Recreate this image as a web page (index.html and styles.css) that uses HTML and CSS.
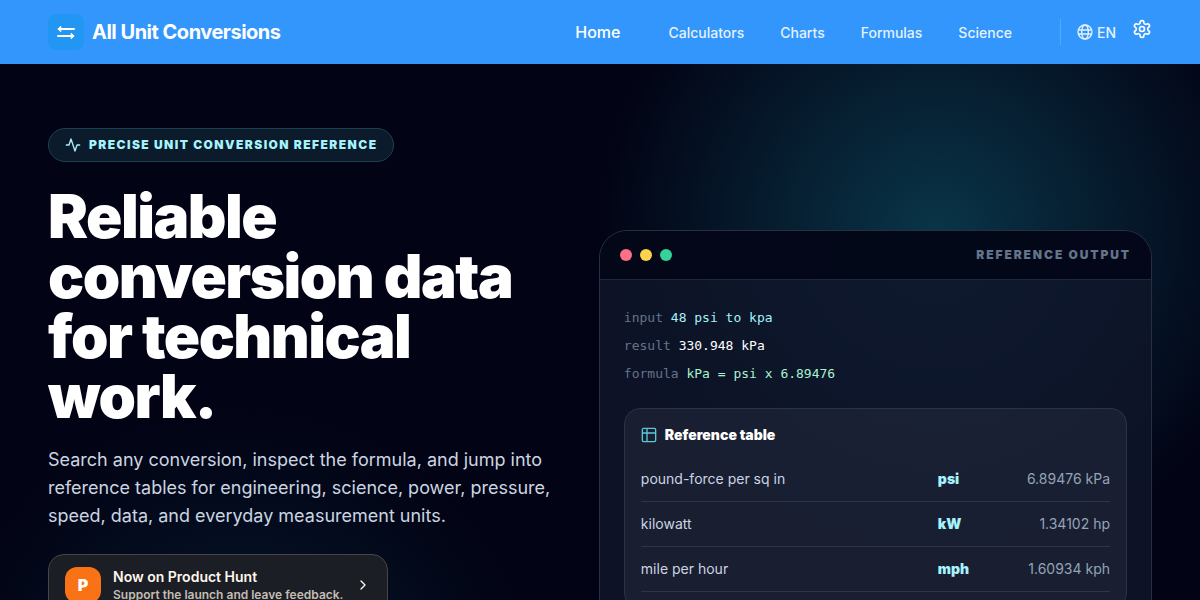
FILE: index.html
```html
<!DOCTYPE html>
<html lang="en">
    <head>
        <meta charset="utf-8">
        <meta name="viewport" content="width=device-width, initial-scale=1">
        <title>All Unit Conversions</title>
        <link rel="stylesheet" href="styles.css">
    </head>
    <body>
        <header class="topbar">
            <a class="brand" href="#">
                <span class="brand-icon">
                    <svg width="20" height="20" viewBox="0 0 20 20" fill="none" stroke="currentColor" stroke-width="2" stroke-linecap="round" stroke-linejoin="round"><path d="M18 7H3M17 14H2"/><path d="M4.500 4.500 1.800 7l2.700 2.500zM15.500 11.500l2.700 2.500-2.700 2.500z" fill="currentColor" stroke-width="1"/></svg>
                </span>
                All Unit Conversions
            </a>
            <nav class="nav">
                <a class="home" href="#">Home</a>
                <a href="#">Calculators</a>
                <a href="#">Charts</a>
                <a href="#">Formulas</a>
                <a href="#">Science</a>
            </nav>
            <div class="tools">
                <button class="lang" type="button">
                    <svg width="16" height="16" viewBox="0 0 24 24" fill="none" stroke="currentColor" stroke-width="2"><circle cx="12" cy="12" r="10.500"/><ellipse cx="12" cy="12" rx="5" ry="10.500"/><path d="M2 9h20M2 15h20"/></svg>
                    EN
                </button>
                <button class="settings" type="button" aria-label="Settings">
                    <svg width="20" height="20" viewBox="0 0 24 24" fill="none" stroke="currentColor" stroke-width="2" stroke-linecap="round" stroke-linejoin="round"><path d="M12.22 2h-.44a2 2 0 0 0-2 2v.18a2 2 0 0 1-1 1.73l-.43.25a2 2 0 0 1-2 0l-.15-.08a2 2 0 0 0-2.73.73l-.22.38a2 2 0 0 0 .73 2.73l.15.1a2 2 0 0 1 1 1.72v.51a2 2 0 0 1-1 1.74l-.15.09a2 2 0 0 0-.73 2.73l.22.38a2 2 0 0 0 2.73.73l.15-.08a2 2 0 0 1 2 0l.43.25a2 2 0 0 1 1 1.73V20a2 2 0 0 0 2 2h.44a2 2 0 0 0 2-2v-.18a2 2 0 0 1 1-1.73l.43-.25a2 2 0 0 1 2 0l.15.08a2 2 0 0 0 2.73-.73l.22-.39a2 2 0 0 0-.73-2.73l-.15-.08a2 2 0 0 1-1-1.74v-.5a2 2 0 0 1 1-1.74l.15-.09a2 2 0 0 0 .73-2.73l-.22-.38a2 2 0 0 0-2.73-.73l-.15.08a2 2 0 0 1-2 0l-.43-.25a2 2 0 0 1-1-1.73V4a2 2 0 0 0-2-2z"/><circle cx="12" cy="12" r="3"/></svg>
                </button>
            </div>
        </header>
        <main class="hero">
            <section class="intro">
                <p class="pill">
                    <svg width="16" height="16" viewBox="0 0 24 24" fill="none" stroke="currentColor" stroke-width="2" stroke-linecap="round" stroke-linejoin="round"><path d="M22 12h-4l-3 9L9 3l-3 9H2"/></svg>
                    Precise unit conversion reference
                </p>
                <h1>Reliable conversion data for technical work.</h1>
                <p class="lead">Search any conversion, inspect the formula, and jump into reference tables for engineering, science, power, pressure, speed, data, and everyday measurement units.</p>
                <a class="launch" href="#">
                    <span class="launch-logo">P</span>
                    <span class="launch-text"><strong>Now on Product Hunt</strong><small>Support the launch and leave feedback.</small></span>
                    <svg width="16" height="16" viewBox="0 0 24 24" fill="none" stroke="currentColor" stroke-width="2" stroke-linecap="round" stroke-linejoin="round"><path d="m9 18 6-6-6-6"/></svg>
                </a>
            </section>
            <section class="panel">
                <div class="panel-head">
                    <span class="dot red"></span>
                    <span class="dot yellow"></span>
                    <span class="dot green"></span>
                    <h2>Reference output</h2>
                </div>
                <div class="panel-body">
                    <div class="output">
                        <p>input <span class="in">48 psi to kpa</span></p>
                        <p>result <span class="res">330.948 kPa</span></p>
                        <p>formula <span class="eq">kPa = psi x 6.89476</span></p>
                    </div>
                    <div class="reference">
                        <h3>
                            <svg width="16" height="16" viewBox="0 0 24 24" fill="none" stroke="currentColor" stroke-width="2" stroke-linejoin="round"><rect x="2" y="2" width="20" height="20" rx="2"/><path d="M2 9h20M9 2v20"/></svg>
                            Reference table
                        </h3>
                        <table>
                            <tr><td>pound-force per sq in</td><td class="unit">psi</td><td class="value">6.89476 kPa</td></tr>
                            <tr><td>kilowatt</td><td class="unit">kW</td><td class="value">1.34102 hp</td></tr>
                            <tr><td>mile per hour</td><td class="unit">mph</td><td class="value">1.60934 kph</td></tr>
                        </table>
                    </div>
                </div>
            </section>
        </main>
    </body>
</html>
```
FILE: styles.css
```css
* {box-sizing:border-box;}
body {margin:0;background:#020314;color:#fff;font-family:Inter, "Liberation Sans", sans-serif;}
h1, h2, h3, p {margin:0;}
a {color:inherit;text-decoration:none;}
button {background:none;border:0;padding:0;color:inherit;font:inherit;cursor:pointer;}
svg {display:block;flex:none;}

.topbar {display:flex;align-items:center;height:64px;padding:0 48px;background:#3296fc;}
.brand {display:flex;align-items:center;gap:8px;font-size:20px;font-weight:700;letter-spacing:-0.025em;}
.brand-icon {display:grid;place-items:center;width:36px;height:36px;border-radius:8px;background:#2196f3;}
.nav {display:flex;align-items:center;gap:36px;margin-left:auto;font-size:14px;font-weight:500;color:#e3f2fd;}
.nav .home {margin-right:12px;font-size:16px;color:#fff;}
.tools {display:flex;align-items:center;gap:16px;height:26px;margin-left:48px;padding-left:16px;border-left:1px solid #54a9fb;color:#fff;}
.lang {display:flex;align-items:center;gap:4px;font-size:14px;font-weight:500;color:#e3f2fd;}
.settings {padding-bottom:6px;}

.hero {
    display:grid;
    grid-template-columns:1fr 1.1fr;
    gap:48px;
    align-items:start;
    min-height:calc(100vh - 64px);
    padding:64px 48px;
    background:
        radial-gradient(circle at 78% 170px, rgba(34,211,238,0.24), transparent 340px),
        radial-gradient(circle at 20% 640px, rgba(14,116,144,0.2), transparent 300px),
        #020314;
}
.pill {
    display:flex;
    align-items:center;
    gap:8px;
    width:fit-content;
    height:34px;
    padding:0 16px;
    border:1px solid #1c4150;
    border-radius:17px;
    background:#0b1b2b;
    color:#a5f3fc;
    font-size:12px;
    line-height:16px;
    font-weight:900;
    letter-spacing:0.12em;
    text-transform:uppercase;
}
h1 {margin:24px 0 20px;font-size:60px;line-height:60px;font-weight:900;letter-spacing:-0.025em;}
.lead {font-size:18px;line-height:28px;color:#cbd5e1;}
.launch {
    display:flex;
    align-items:center;
    gap:12px;
    width:fit-content;
    margin-top:24px;
    padding:12px 16px;
    border:1px solid #4a4540;
    border-radius:16px;
    background:#1b1e24;
    color:#fff7ed;
}
.launch-logo {display:grid;place-items:center;width:36px;height:36px;border-radius:12px;background:#f97316;color:#fff;font-size:16px;font-weight:900;}
.launch-text strong, .launch-text small {display:block;font-weight:600;}
.launch-text strong {font-size:14px;line-height:20px;}
.launch-text small {font-size:12px;line-height:16px;color:#c4bdb4;}

.panel {margin-top:102px;border:1px solid #27303f;border-radius:28px;background:rgba(15,21,42,0.84);overflow:hidden;}
.panel-head {display:flex;align-items:center;gap:8px;height:49px;padding:0 20px;border-bottom:1px solid #202737;background:rgba(2,6,23,0.88);}
.dot {width:12px;height:12px;border-radius:50%;}
.red {background:#fb7185;}
.yellow {background:#fcd34d;}
.green {background:#34d399;}
h2 {margin-left:auto;font-size:12px;line-height:16px;font-weight:900;letter-spacing:0.16em;text-transform:uppercase;color:#64748b;}
.panel-body {padding:24px;}
.output {font-family:"DejaVu Sans Mono", monospace;font-size:13px;line-height:28px;color:#64748b;}
.in {color:#a5f3fc;}
.res {color:#fff;}
.eq {color:#a7f3d0;}
.reference {margin-top:20px;padding:16px;border:1px solid #2c3444;border-radius:16px;background:rgba(255,255,255,0.05);}
h3 {display:flex;align-items:center;gap:8px;margin-bottom:12px;font-size:14px;line-height:20px;font-weight:900;}
h3 svg {color:#5ac8d8;}
table {width:100%;border-spacing:0;table-layout:fixed;font-size:14px;line-height:20px;color:#cbd5e1;}
td {height:45px;padding:0;border-bottom:1px solid #2e3546;}
td:first-child {width:297px;}
.unit {width:60px;font-weight:900;color:#a5f3fc;}
.value {text-align:right;color:#94a3b8;}
```
